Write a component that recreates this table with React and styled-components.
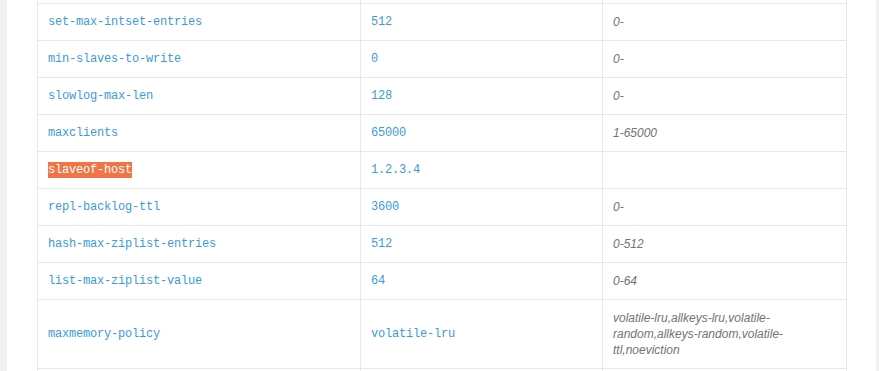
import React from "react";
import styled, { createGlobalStyle } from "styled-components";

const Global = createGlobalStyle`
  html, body { margin: 0; padding: 0; background: #eef2f5; }
  body { overflow: hidden; }
`;

const Page = styled.div`
  width: 879px;
  height: 371px;
  overflow: hidden;
  padding: 0 3px 0 7px;
  box-sizing: border-box;
  background: #eef2f5;
`;

const Panel = styled.div`
  background: #fff;
  height: 100%;
  padding: 0 31px 0 30px;
  box-sizing: border-box;
  overflow: hidden;
`;

const Table = styled.table`
  width: 809px;
  border-collapse: collapse;
  table-layout: fixed;
  margin-top: -34px;
`;

const Cell = styled.td`
  border: 1px solid #e3e8ea;
  padding: 10px 10px;
  line-height: 16px;
  height: 16px;
  vertical-align: middle;
  ${(p) =>
    p.$kind === "range"
      ? `font-family: "Liberation Sans", Arial, sans-serif; font-style: italic; color: #737373; font-size: 12px;`
      : `font-family: "Liberation Mono", "Courier New", monospace; color: #3c9bd8; font-size: 12px; letter-spacing: -0.2px;`}
`;

const Mark = styled.span`
  background: #ef7546;
  color: #fff;
  padding: 1px 0;
`;

const rows = [
  ["\u00a0", "\u00a0", "\u00a0"],
  ["set-max-intset-entries", "512", "0-"],
  ["min-slaves-to-write", "0", "0-"],
  ["slowlog-max-len", "128", "0-"],
  ["maxclients", "65000", "1-65000"],
  ["slaveof-host", "1.2.3.4", "", true],
  ["repl-backlog-ttl", "3600", "0-"],
  ["hash-max-ziplist-entries", "512", "0-512"],
  ["list-max-ziplist-value", "64", "0-64"],
  [
    "maxmemory-policy",
    "volatile-lru",
    "volatile-lru,allkeys-lru,volatile-random,allkeys-random,volatile-ttl,noeviction",
  ],
  ["\u00a0 ", "\u00a0", "\u00a0"],
];

export default function App() {
  return (
    <>
      <Global />
      <Page>
        <Panel>
          <Table>
            <colgroup>
              <col style={{ width: 323 }} />
              <col style={{ width: 242 }} />
              <col style={{ width: 244 }} />
            </colgroup>
            <tbody>
              {rows.map(([k, v, r, hl], i) => (
                <tr key={i}>
                  <Cell>{hl ? <Mark>{k}</Mark> : k}</Cell>
                  <Cell>{v}</Cell>
                  <Cell $kind="range">{r}</Cell>
                </tr>
              ))}
            </tbody>
          </Table>
        </Panel>
      </Page>
    </>
  );
}
